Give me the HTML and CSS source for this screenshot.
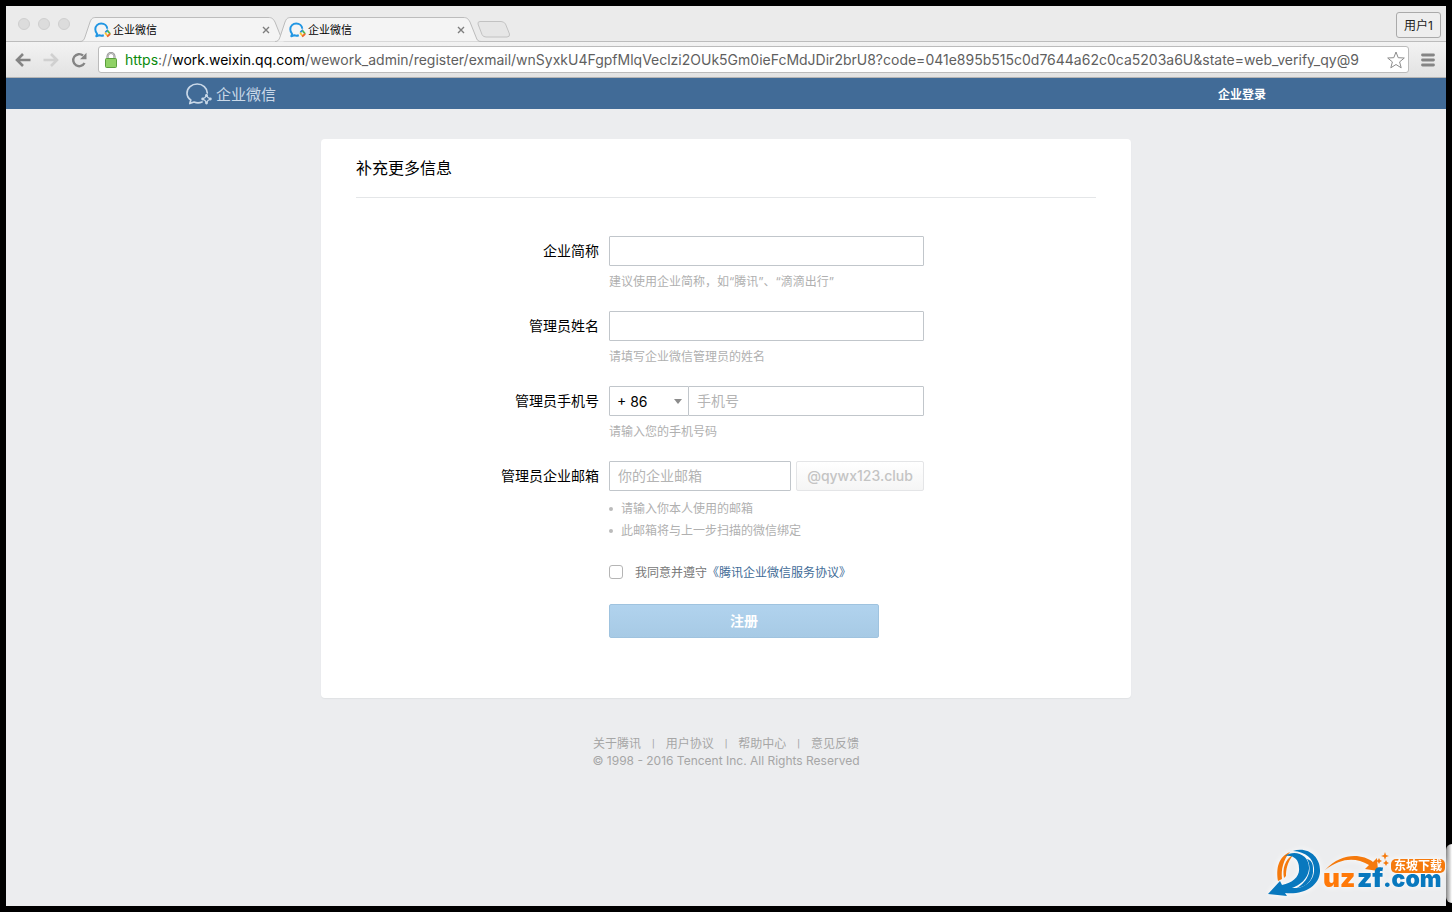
FILE: index.html
```html
<!DOCTYPE html>
<html lang="zh-CN">
<head>
<meta charset="utf-8">
<title>企业微信</title>
<link rel="stylesheet" href="styles.css">
</head>
<body>
<svg class="defs" aria-hidden="true">
  <symbol id="tab-shape" viewBox="0 0 206 25">
    <path d="M0 24.5C3 24.5 4 23 5 20L10 5C11.500 1.500 12.500 .5 16 .5H188C192 .5 193 1.500 195 5L201 20C202 23 203 24.500 206 24.500" fill="#f4f4f4" stroke="#bcbcbc"/>
  </symbol>
  <symbol id="bubble" viewBox="0 0 26 22">
    <path d="M16 19C13.500 20 10 19.800 8 19L3.800 20.500L4.800 17C2 15 1 12.500 1 10.200C1 5 5.600 1 11.200 1C16.900 1 21 5 21.300 10" fill="none" stroke-linejoin="round" stroke-linecap="round"/>
  </symbol>
  <symbol id="fav" viewBox="0 0 26 24">
    <path d="M15 20C12.500 21 10 21 8 20L3.500 21.500L4.800 18C2.500 16 2 13 2 11C2 6 6 2 11 2C16 2 20 5.500 20.300 10" fill="none" stroke="#2196e3" stroke-width="3" stroke-linejoin="round"/>
    <g fill="none" stroke-width="2.800" stroke-linecap="round">
      <path d="M20.500 12.500L18 15" stroke="#2a8edb"/><path d="M21.500 14L24 17" stroke="#4dbb50"/>
      <path d="M17.500 17L20 20" stroke="#fbc52d"/><path d="M24 18.500L21 21.500" stroke="#f0652f"/>
    </g>
  </symbol>
</svg>
<div class="window">
  <div class="tabstrip">
    <div class="lights"><i></i><i></i><i></i></div>
    <div class="tab">
      <svg class="tab-bg"><use href="#tab-shape"/></svg>
      <svg class="fav"><use href="#fav"/></svg>
      <span class="tab-title">企业微信</span>
      <button class="close" aria-label="关闭标签页"><svg viewBox="0 0 8 8"><path d="M1 1L7 7M7 1L1 7"/></svg></button>
    </div>
    <div class="tab">
      <svg class="tab-bg"><use href="#tab-shape"/></svg>
      <svg class="fav"><use href="#fav"/></svg>
      <span class="tab-title">企业微信</span>
      <button class="close" aria-label="关闭标签页"><svg viewBox="0 0 8 8"><path d="M1 1L7 7M7 1L1 7"/></svg></button>
    </div>
    <button class="newtab" aria-label="新标签页"><svg viewBox="0 0 34 17"><path d="M3 .5H24Q27 .5 28.500 3L32.500 13Q33 16 30 16H9Q6 16 5 13.500L1 3Q.5 .5 3 .5Z" fill="#e6e6e6" stroke="#c2c2c2"/></svg></button>
    <button class="user">用户1</button>
  </div>
  <div class="toolbar">
    <button class="tool" aria-label="后退"><svg viewBox="0 0 16 16"><path d="M15.500 8H2.500M8 2L2 8L8 14" fill="none" stroke="#848484" stroke-width="2.600"/></svg></button>
    <button class="tool" aria-label="前进"><svg viewBox="0 0 16 16"><path d="M.5 8H13.500M8 2L14 8L8 14" fill="none" stroke="#d0d0d0" stroke-width="2.600"/></svg></button>
    <button class="tool" aria-label="重新加载"><svg viewBox="0 0 16 16"><path d="M13.500 11A6 6 0 1 1 12 3.500" fill="none" stroke="#848484" stroke-width="2.400"/><path d="M15.500 .8V7.200H9Z" fill="#848484"/></svg></button>
    <div class="address">
      <svg class="lock" viewBox="0 0 12 16"><path d="M2.500 8V4.500A3.500 3.500 0 0 1 9.500 4.500V8" fill="none" stroke="#8a8a8a" stroke-width="2"/><path d="M2.500 8V4.500A3.500 3.500 0 0 1 9.500 4.500V8" fill="none" stroke="#ddd" stroke-width=".7"/><rect x=".5" y="6.500" width="11" height="9" rx="1" fill="#8fd165" stroke="#5b9e3d"/></svg>
      <span class="url"><span class="secure">https</span>://<span class="host">work.weixin.qq.com</span>/wework_admin/register/exmail/wnSyxkU4FgpfMlqVeclzi2OUk5Gm0ieFcMdJDir2brU8?code=041e895b515c0d7644a62c0ca5203a6U&amp;state=web_verify_qy@9</span>
      <svg class="star" viewBox="0 0 18 18"><path d="M9 1L11.200 6.700L17.300 7L12.600 10.900L14.200 16.800L9 13.500L3.800 16.800L5.400 10.900L.7 7L6.800 6.700Z" fill="#fff" stroke="#8b8b8b" stroke-linejoin="round"/></svg>
    </div>
    <button class="menu" aria-label="菜单"><svg viewBox="0 0 14 14"><path d="M1.500 2H12.500M1.500 7H12.500M1.500 12H12.500" stroke="#858585" stroke-width="2.800" stroke-linecap="round"/></svg></button>
  </div>
  <header class="header">
    <div class="header-inner">
      <a class="brand" href="#">
        <svg viewBox="0 0 26 22"><use href="#bubble" width="26" height="22" stroke="#c9d8e8" stroke-width="1.700"/><path d="M20.500 12L22 14.500L24.500 16L22 17.500L20.500 20L19 17.500L16.500 16L19 14.500Z" fill="none" stroke="#c9d8e8" stroke-width="1.200"/><g fill="#c9d8e8"><circle cx="20.500" cy="12.300" r="1.400"/><circle cx="24.300" cy="16" r="1.400"/><circle cx="20.500" cy="20" r="1.400"/><circle cx="16.700" cy="16" r="1.400"/></g></svg>
        <span>企业微信</span>
      </a>
      <a class="login" href="#">企业登录</a>
    </div>
  </header>
  <main class="page">
    <form class="card">
      <h1>补充更多信息</h1>
      <div class="rows">
        <div class="row">
          <label for="corp">企业简称</label>
          <div class="field"><input id="corp" type="text"><p class="hint">建议使用企业简称，如“腾讯”、“滴滴出行”</p></div>
        </div>
        <div class="row">
          <label for="name">管理员姓名</label>
          <div class="field"><input id="name" type="text"><p class="hint">请填写企业微信管理员的姓名</p></div>
        </div>
        <div class="row">
          <label for="phone">管理员手机号</label>
          <div class="field">
            <div class="phone">
              <div class="code"><select aria-label="国家区号"><option>+ 86</option></select></div>
              <input id="phone" type="tel" placeholder="手机号">
            </div>
            <p class="hint">请输入您的手机号码</p>
          </div>
        </div>
        <div class="row">
          <label for="mail">管理员企业邮箱</label>
          <div class="field">
            <div class="mail"><input id="mail" type="text" placeholder="你的企业邮箱"><span class="domain">@qywx123.club</span></div>
            <ul class="tips"><li>请输入你本人使用的邮箱</li><li>此邮箱将与上一步扫描的微信绑定</li></ul>
            <div class="agree"><input id="agree" type="checkbox"><label for="agree">我同意并遵守<a href="#">《腾讯企业微信服务协议》</a></label></div>
            <button class="submit" type="submit">注册</button>
          </div>
        </div>
      </div>
    </form>
    <footer class="footer">
      <nav><a href="#">关于腾讯</a><span>|</span><a href="#">用户协议</a><span>|</span><a href="#">帮助中心</a><span>|</span><a href="#">意见反馈</a></nav>
      <p>© 1998 - 2016 Tencent Inc. All Rights Reserved</p>
    </footer>
  </main>
</div>
<div class="edge"></div>
<svg class="watermark" viewBox="0 0 188 60" role="img" aria-label="uzzf.com 东坡下载">
  <path d="M10 38C8 26 10 14 22 9C15 17 13 27 14 36ZM16 35C14 26 17 16 25 12C19 20 18 27 18 33Z" fill="#f57a0d"/>
  <path d="M17 13C26 6 42 11 41 26C40 36 32 42 24 45C36 46 47 38 46 25C45 15 38 9 25 8C40 3 53 14 52 29C51 43 36 52 17 50L19 53L0 51L12 38L14 42C25 40 32 33 31 25C31 17 26 12 17 13Z" fill="#0878be"/>
  <path d="M39 16C45 27 40 38 29 45C38 44 46 37 45 26C45 20 43 17 39 16Z" fill="#0878be"/>
  <path d="M57 27C74 9 94 11 105 19L109 15L110 28L97 26L101 22C87 14 73 15 57 27Z" fill="#f57a0d"/>
  <g class="wordmark"><text x="55" y="44" fill="#ff7909">uz</text><text x="89" y="44" fill="#0878be">zf</text><text class="com" x="115" y="44" fill="#0878be">.com</text></g>
  <rect x="123" y="16" width="54" height="14" rx="5" fill="#f57a0d"/>
  <text class="wm-cn" x="126" y="27">东坡下载</text>
  <path d="M117 9L118 12L121 13L118 14L117 17L116 14L113 13L116 12ZM111 15L112 17L114 18L112 19L111 21L110 19L108 18L110 17ZM118 17L119 19L121 20L119 21L118 23L117 21L115 20L117 19Z" fill="#f57a0d"/>
</svg>
</body>
</html>
```
FILE: styles.css
```css
* { box-sizing: border-box; }
body {
  margin: 0;
  padding: 6px;
  min-height: 100vh;
  display: flex;
  position: relative;
  background: #000;
  color: #000;
  font-family: Inter, "Noto Sans CJK SC", sans-serif;
  font-size: 14px;
}
button { padding: 0; border: 0; background: none; font: inherit; }
a { text-decoration: none; color: inherit; }
p, h1, ul { margin: 0; padding: 0; }
svg { display: block; }
.defs { position: absolute; width: 0; height: 0; }
.window { flex: 1; min-width: 0; display: flex; flex-direction: column; background: #ecedef; }

.tabstrip { height: 36px; display: flex; align-items: flex-end; background: #ebebeb; border-bottom: 1px solid #bcbcbc; }
.lights { display: flex; gap: 8px; align-self: center; padding: 0 10px 0 12px; }
.lights i { width: 12px; height: 12px; border-radius: 50%; background: #dcdcdc; border: 1px solid #cfcfcf; }
.tab { position: relative; width: 206px; height: 25px; margin-bottom: -1px; margin-right: -11px; padding: 0 16px 0 14px; display: flex; align-items: center; gap: 2px; }
.tab-bg { position: absolute; inset: 0; width: 206px; height: 25px; }
.fav { position: relative; width: 17px; height: 16px; }
.tab-title { position: relative; flex: 1; font-size: 11px; line-height: 16px; }
.close { position: relative; width: 8px; height: 8px; }
.close path { stroke: #7e7e7e; stroke-width: 1.4; }
.newtab { width: 34px; height: 17px; margin: 0 0 3px 7px; }
.user { margin: 0 5px 3px auto; width: 45px; height: 26px; padding-bottom: 2px; border: 1px solid #aaa; border-radius: 3px; background: #eee; font-size: 12px; color: #222; }

.toolbar { height: 36px; display: flex; align-items: center; gap: 12px; padding: 0 11px 0 9px; background: linear-gradient(#f3f3f3, #e2e2e2); border-bottom: 1px solid #b5b5b5; }
.tool { width: 16px; height: 16px; flex: none; }
.address { flex: 1; min-width: 0; height: 27px; margin-left: -1px; padding: 0 3px 0 6px; display: flex; align-items: center; gap: 8px; background: #fff; border: 1px solid #bbb; border-radius: 3px; }
.lock { width: 12px; height: 16px; flex: none; }
.url { flex: 1; min-width: 0; overflow: hidden; white-space: nowrap; font-size: 14px; color: #5f5f5f; }
.secure { color: #0b8a0b; }
.host { color: #000; }
.star { width: 18px; height: 18px; flex: none; }
.menu { width: 14px; height: 14px; flex: none; }

.header { background: #416b97; height: 31px; }
.header-inner { max-width: 1080px; height: 100%; margin: 0 auto; display: flex; align-items: center; justify-content: space-between; }
.brand { display: flex; align-items: center; gap: 4px; color: #c9d8e8; font-size: 15px; }
.brand svg { width: 26px; height: 22px; }
.login { color: #fff; font-size: 12px; font-weight: bold; }

.page { padding: 30px 0; }
.card { max-width: 810px; margin: 0 auto; padding: 0 35px 60px; background: #fff; border-radius: 4px; box-shadow: 0 1px 1px #e0e2e4; }
.card h1 { padding: 17px 0 17px; line-height: 24px; font-size: 16px; font-weight: normal; border-bottom: 1px solid #e4e6e8; }
.rows { padding-top: 38px; display: grid; gap: 20px; }
.row { display: grid; grid-template-columns: 243px minmax(0, 315px); column-gap: 10px; }
.row > label { text-align: right; line-height: 30px; }
.field input[type="text"], .field input[type="tel"], .code select {
  display: block; width: 100%; height: 30px; margin: 0; padding: 0 8px 2px;
  border: 1px solid #c1c6cb; border-radius: 1px; background: #fff; color: #000; font: inherit; outline: 0;
}
.field input::placeholder { color: #b4b4b4; opacity: 1; }
.hint { padding-top: 6px; line-height: 19px; font-size: 12px; color: #b0b0b0; }
.phone { display: flex; }
.code { position: relative; width: 80px; flex: none; margin-right: -1px; }
.field .code select { appearance: none; padding: 0 7px; }
.code::after { content: ""; position: absolute; right: 7px; top: 13px; border: 4px solid transparent; border-top: 5px solid #8c8c8c; border-bottom: 0; pointer-events: none; }
.mail { display: flex; gap: 5px; }
.mail input { flex: 1; min-width: 0; }
.domain { flex: none; width: 128px; line-height: 28px; text-align: center; border: 1px solid #e4e5e7; border-radius: 2px; background: linear-gradient(#fff, #f5f5f5); color: #c4c4c4; font-weight: 500; }
.tips { margin-top: 7px; list-style: none; font-size: 12px; line-height: 22px; color: #b0b0b0; }
.tips li { display: flex; align-items: center; gap: 8px; }
.tips li::before { content: ""; width: 4px; height: 4px; border-radius: 50%; background: #bbb; }
.agree { margin-top: 20px; height: 20px; display: flex; align-items: center; gap: 12px; font-size: 12px; color: #777; }
.agree label { padding-bottom: 2px; }
.agree input { appearance: none; width: 14px; height: 14px; margin: 0; border: 1px solid #b5b5b5; border-radius: 3px; background: #fff; }
.agree a { color: #416b97; }
.submit { display: block; margin-top: 22px; width: 270px; height: 34px; padding-bottom: 2px; border: 1px solid #9fc3df; border-radius: 2px; background: linear-gradient(#b1d3ee, #a7cae5); color: #fff; font-weight: bold; }

.footer { margin-top: 37px; text-align: center; font-size: 12px; line-height: 17px; color: #a6a6a6; }
.footer nav { display: flex; justify-content: center; gap: 11px; }
.footer nav span { font-family: Roboto, sans-serif; font-size: 11px; }

.edge { position: absolute; right: 0; bottom: 9px; width: 6px; height: 59px; border-radius: 6px 0 0 6px; background: linear-gradient(90deg, #888, #fff); }
.watermark { position: absolute; right: -4px; bottom: 9px; width: 188px; height: 60px; filter: drop-shadow(0 0 3px #fff); }
.wordmark { font: 900 26px Inter, sans-serif; }
.com { font-size: 23px; }
.wm-cn { font: bold 12px "Noto Sans CJK SC", sans-serif; fill: #fff; }
```
